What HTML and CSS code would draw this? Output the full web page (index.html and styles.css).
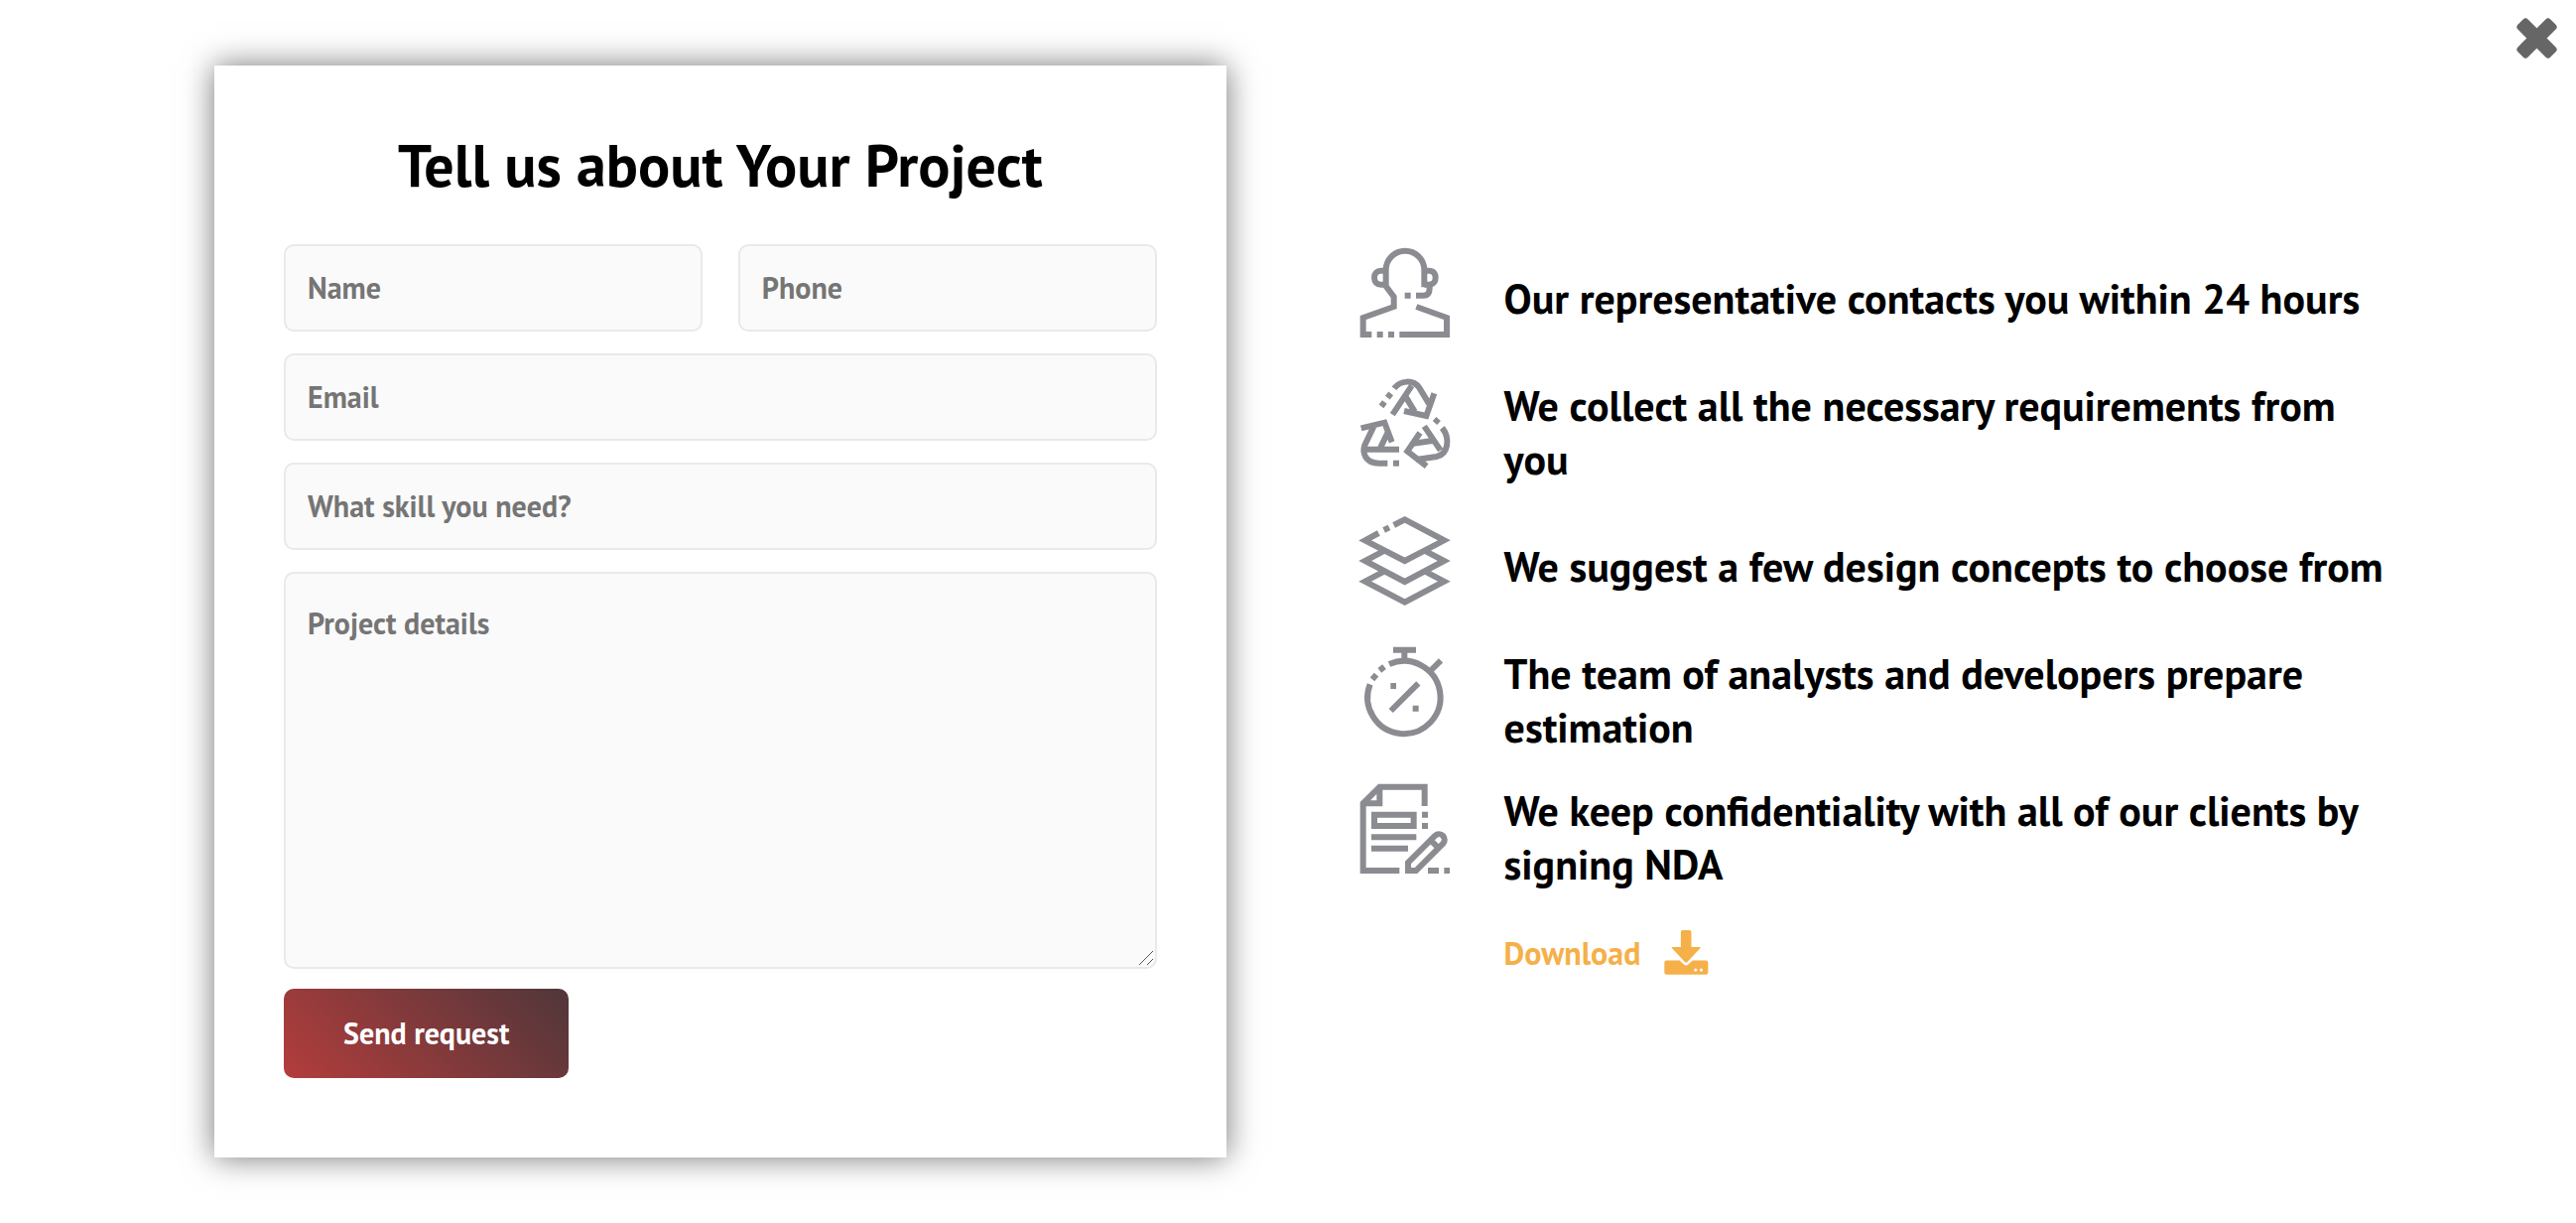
FILE: index.html
```html
<!DOCTYPE html>
<html lang="en">
<head>
    <meta charset="UTF-8">
    <meta name="viewport" content="width=device-width, initial-scale=1.0">
    <title>Tell us about Your Project</title>
    <link rel="stylesheet" href="styles.css">
</head>
<body>

    <button type="button" class="close" aria-label="Close">
        <svg viewBox="0 0 120 120">
            <rect x="-8" y="39" width="136" height="42" rx="10" transform="rotate(45 60 60)"/>
            <rect x="-8" y="39" width="136" height="42" rx="10" transform="rotate(-45 60 60)"/>
        </svg>
    </button>

    <main class="request">
        <form class="card" id="requestForm">
            <h2>Tell us about Your Project</h2>

            <div class="fields">
                <div class="row">
                    <div class="field">
                        <label for="name">Name</label>
                        <input type="text" id="name" placeholder="Name">
                    </div>
                    <div class="field">
                        <label for="phone">Phone</label>
                        <input type="tel" id="phone" placeholder="Phone">
                    </div>
                </div>
                <div class="field">
                    <label for="email">Email</label>
                    <input type="email" id="email" placeholder="Email">
                </div>
                <div class="field">
                    <label for="skill">What skill you need?</label>
                    <input type="text" id="skill" placeholder="What skill you need?">
                </div>
                <div class="field">
                    <label for="details">Project details</label>
                    <textarea id="details" placeholder="Project details"></textarea>
                    <svg class="grip" viewBox="0 0 16 16">
                        <path d="M1 15L15 1M9 15L15 9"/>
                    </svg>
                </div>
            </div>

            <button type="submit" class="btn">Send request</button>
        </form>

        <section class="info">
            <ul class="steps">
                <li>
                    <!-- Operator -->
                    <svg class="icon" viewBox="0 0 270 270">
                        <path d="M193 118V66A58 58 0 0 0 77 66V115L101 147V177L8 210V261H34"/>
                        <path d="M118 261H261V210L169 177"/>
                        <path d="M74 68H62C50 68 42 76 42 89S50 110 62 110H74M193 68H207C220 68 227 76 227 89S220 110 207 110H193"/>
                        <path d="M209 114V122C209 136 202 143 190 143H168"/>
                        <path d="M134 143H152M50 261H68M84 261H102"/>
                    </svg>
                    <p>Our representative contacts you within 24 hours</p>
                </li>
                <li>
                    <!-- Recycle arrows -->
                    <svg class="icon" viewBox="0 0 270 270">
                        <path d="M102 28C120 3 160 0 178 26L207 74M97 107L155 20M135 50L164 98M223 43L199 111L132 96"/>
                        <path d="M2 148L73 131L95 190M40 143L13 199C5 222 14 254 56 254H82M13 212H117M82 162L60 208"/>
                        <path d="M180 162L142 218L200 263M247 147C272 178 266 226 230 234L168 243M193 142L242 215M160 194L217 186"/>
                        <path d="M82 56L92 43M63 82L73 69M225 132L236 120"/>
                        <path d="M99 254H117"/>
                    </svg>
                    <p>We collect all the necessary requirements from you</p>
                </li>
                <li>
                    <!-- Layers -->
                    <svg class="icon" viewBox="0 0 270 270">
                        <path d="M55 51L14 73L134 135L253 73L134 10L101 27M71 42L87 34"/>
                        <path d="M73 104L14 135L134 198L253 135L194 104"/>
                        <path d="M73 166L14 197L134 260L253 197L194 166"/>
                    </svg>
                    <p>We suggest a few design concepts to choose from</p>
                </li>
                <li>
                    <!-- Stopwatch -->
                    <svg class="icon" viewBox="0 0 270 270">
                        <path d="M87 51A110 110 0 1 1 29 112"/>
                        <path d="M99 8H168M133 8V42M243 40L211 72M92 192L175 109"/>
                        <path d="M91 117H108M158 185H176M58 70L72 59M36 97L48 83"/>
                    </svg>
                    <p>The team of analysts and developers prepare estimation</p>
                </li>
                <li>
                    <!-- Document with pencil -->
                    <svg class="icon" viewBox="0 0 270 270">
                        <path d="M118 261H8V58L58 8H194V66M58 10V58H14"/>
                        <path d="M186 92H204M186 126H204M42 92H161V126H42ZM33 160H169M33 194H144"/>
                        <path d="M144 261V237L226 155A17 17 0 0 1 250 179L168 261ZM215 172L234 191M204 261H237M253 261H270"/>
                    </svg>
                    <p>We keep confidentiality with all of our clients by signing NDA</p>
                </li>
            </ul>

            <a href="#" class="download">
                Download
                <svg viewBox="0 0 134 136">
                    <path d="M56 0H76Q82 0 82 6V51H107Q113 51 108 56L70 97Q66 101 62 97L24 56Q19 51 25 51H50V6Q50 0 56 0Z"/>
                    <path fill-rule="evenodd" d="M6 92H46L60 105Q66 110 72 105L86 92H127Q133 92 133 98V129Q133 135 127 135H6Q0 135 0 129V98Q0 92 6 92ZM90 121a5 5 0 1 0 10 0a5 5 0 1 0-10 0M107 121a5 5 0 1 0 10 0a5 5 0 1 0-10 0"/>
                </svg>
            </a>
        </section>
    </main>

</body>
</html>
```
FILE: styles.css
```css
/* Global styles */
* {
    box-sizing: border-box;
}

body {
    margin: 0;
    min-height: 100vh;
    font-family: "PT Sans", Lato, sans-serif;
    font-weight: bold;
    color: #000;
    background-color: #fff;
}

/* Close button in the page corner */
.close {
    position: absolute;
    top: 18px;
    right: 19px;
    padding: 0;
    border: none;
    background: none;
    cursor: pointer;
}

.close svg {
    display: block;
    width: 41px;
    height: 41px;
    fill: #666;
}

/* Two columns: form and steps */
.request {
    display: grid;
    grid-template-columns: 49fr 50fr;
    column-gap: 135px;
    align-items: center;
    min-height: 100vh;
    padding: 66px 185px 66px 216px;
}

/* Form card */
.card {
    padding: 65px 70px 80px;
    background-color: #fff;
    box-shadow: 0 0 30px rgba(0, 0, 0, 0.54);
}

h2 {
    margin: 0 0 45px;
    font-size: 60px;
    line-height: 70px;
    text-align: center;
}

.fields {
    display: grid;
    gap: 22px;
    margin-bottom: 20px;
}

.row {
    display: grid;
    grid-template-columns: 1fr 1fr;
    gap: 36px;
}

.field {
    position: relative;
}

/* Labels lie unseen over the fields, the placeholders are visible */
.field label {
    position: absolute;
    top: 24px;
    left: 24px;
    font-size: 30px;
    line-height: 40px;
    opacity: 0;
    pointer-events: none;
}

input, textarea {
    display: block;
    width: 100%;
    height: 88px;
    padding: 0 22px 2px;
    border: 2px solid #e9e9e9;
    border-radius: 10px;
    background-color: #fafafa;
    font: inherit;
    font-size: 30px;
}

textarea {
    height: 400px;
    padding-top: 30px;
    resize: vertical;
}

/* Own resize grip over the corner of the textarea */
textarea::-webkit-resizer {
    background: none;
}

.grip {
    position: absolute;
    right: 3px;
    bottom: 3px;
    width: 16px;
    height: 16px;
    fill: none;
    stroke: #555;
    stroke-width: 1;
    pointer-events: none;
}

input::placeholder, textarea::placeholder {
    color: #757575;
}

.btn {
    padding: 0 60px;
    border: none;
    border-radius: 10px;
    background: linear-gradient(45deg, #b33d3c, #50363a);
    color: #fff;
    font: inherit;
    font-size: 30px;
    line-height: 90px;
    cursor: pointer;
}

/* Steps list */
.steps {
    display: grid;
    gap: 30px;
    margin: 0 0 39px;
    padding: 0;
    list-style: none;
}

.steps li {
    display: flex;
    gap: 55px;
    min-height: 102px;
}

.steps p {
    margin: 0;
    align-self: center;
    font-size: 42px;
    line-height: 54px;
}

.icon {
    flex: none;
    width: 90px;
    height: 90px;
    overflow: visible;
    fill: none;
    stroke: #8b8c91;
    stroke-width: 18;
}

.download {
    display: inline-flex;
    align-items: center;
    gap: 24px;
    margin-left: 145px;
    color: #f5b049;
    font-size: 32px;
    text-decoration: none;
}

.download svg {
    width: 45px;
    height: 45px;
    fill: currentColor;
}
```
